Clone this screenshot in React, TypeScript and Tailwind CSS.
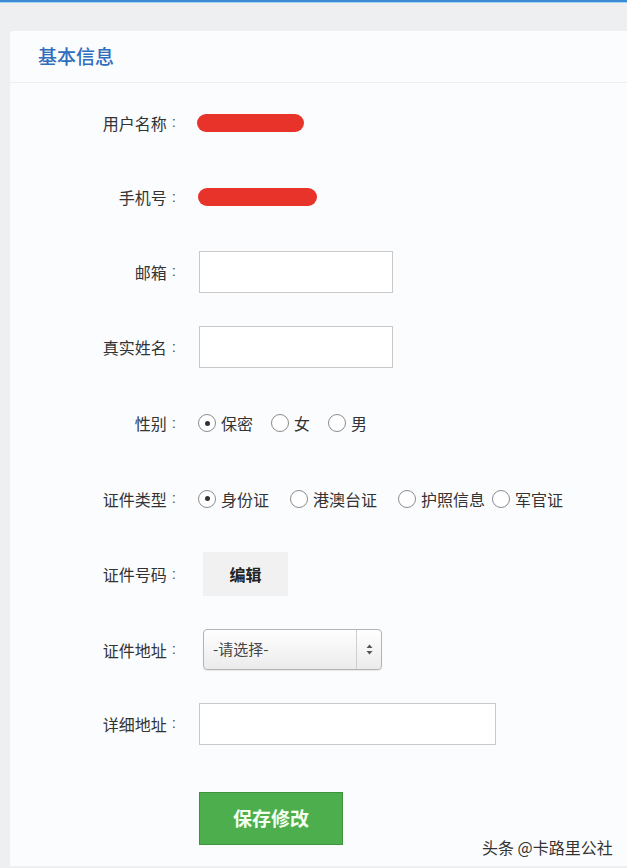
import React from "react";

const font = { fontFamily: '"Noto Sans CJK SC", "Noto Sans", sans-serif' };

function Label({ text }: { text: string }) {
  return (
    <div className="w-[167px] shrink-0 flex justify-end items-center text-[16px] text-[#333]">
      <span>{text}</span>
      <span className="ml-[5px] mr-[1px] text-[15px] text-[#555]" style={{ fontFamily: '"Liberation Sans", sans-serif' }}>:</span>
    </div>
  );
}

function Row({ label, h, children }: { label: string; h: string; children: React.ReactNode }) {
  return (
    <div className={`${h} flex items-center`}>
      <Label text={label} />
      <div className="ml-[21px] flex items-center">{children}</div>
    </div>
  );
}

function Radio({ checked, text, ml }: { checked?: boolean; text: string; ml: string }) {
  return (
    <div className={`flex items-center ${ml}`}>
      <span className="w-[18px] h-[18px] rounded-full border border-[#8c8c8c] bg-white flex items-center justify-center">
        {checked && <span className="w-[5px] h-[5px] rounded-full bg-[#333]" />}
      </span>
      <span className="ml-[5px] text-[16px] text-[#333]">{text}</span>
    </div>
  );
}

export default function App() {
  return (
    <div className="relative w-full h-[868px] bg-[#edeff1] overflow-hidden" style={font}>
      <div className="h-[2px] bg-[#3a8bd4]" />
      <div className="h-[1px] bg-[#a9d1f2]" />
      <div className="pt-[28px] pl-[10px]">
        <div className="h-[835px] bg-[#fbfcfe] rounded-tl-[3px]">
          <div className="h-[52px] flex items-center pl-[28px] border-b border-[#eceef2]">
            <span className="text-[19px] text-[#2f6dbd] font-medium">基本信息</span>
          </div>
          <div className="pt-[2px]">
            <Row label="用户名称" h="h-[75px]">
              <div className="-ml-[1px] w-[107px] h-[18px] rounded-full bg-[#e8332b]" />
            </Row>
            <Row label="手机号" h="h-[74px]">
              <div className="w-[119px] h-[18px] rounded-full bg-[#e8332b]" />
            </Row>
            <Row label="邮箱" h="h-[75px]">
              <div className="ml-[1px] w-[194px] h-[42px] border border-[#c9c9c9] bg-white" />
            </Row>
            <Row label="真实姓名" h="h-[76px]">
              <div className="ml-[1px] w-[194px] h-[42px] border border-[#c9c9c9] bg-white" />
            </Row>
            <Row label="性别" h="h-[76px]">
              <Radio checked text="保密" ml="ml-0" />
              <Radio text="女" ml="ml-[18px]" />
              <Radio text="男" ml="ml-[18px]" />
            </Row>
            <Row label="证件类型" h="h-[75px]">
              <Radio checked text="身份证" ml="ml-0" />
              <Radio text="港澳台证" ml="ml-[21px]" />
              <Radio text="护照信息" ml="ml-[21px]" />
              <Radio text="军官证" ml="ml-[7px]" />
            </Row>
            <Row label="证件号码" h="h-[76px]">
              <div className="ml-[5px] w-[85px] h-[44px] bg-[#f1f1f1] flex items-center justify-center text-[16px] font-bold text-[#222]">
                编辑
              </div>
            </Row>
            <Row label="证件地址" h="h-[75px]">
              <div className="ml-[5px] w-[179px] h-[41px] rounded-[4px] border border-[#b3b3b3] bg-gradient-to-b from-[#ffffff] to-[#ebebeb] flex items-stretch shadow-[0_1px_1px_rgba(0,0,0,0.08)]">
                <div className="flex-1 flex items-center pl-[9px] text-[15px] text-[#444]">-请选择-</div>
                <div className="w-[25px] border-l border-[#cfcfcf] flex items-center justify-center">
                  <svg width="7" height="11" viewBox="0 0 7 11">
                    <path d="M3.5 0.5 L6.5 4 L0.5 4 Z" fill="#555" />
                    <path d="M3.5 10.5 L6.5 7 L0.5 7 Z" fill="#555" />
                  </svg>
                </div>
              </div>
            </Row>
            <Row label="详细地址" h="h-[73px]">
              <div className="ml-[1px] w-[297px] h-[42px] border border-[#c9c9c9] bg-white" />
            </Row>
          </div>
          <div className="mt-[32px] ml-[189px]">
            <div className="w-[144px] h-[53px] bg-[#4cae4c] border border-[#3f933f] flex items-center justify-center text-[19px] font-bold text-[#f4fff0]">
              保存修改
            </div>
          </div>
        </div>
      </div>
      <div className="absolute left-[482px] top-[835px] text-[16px] text-[#333] whitespace-nowrap">
        头条 @卡路里公社
      </div>
    </div>
  );
}
